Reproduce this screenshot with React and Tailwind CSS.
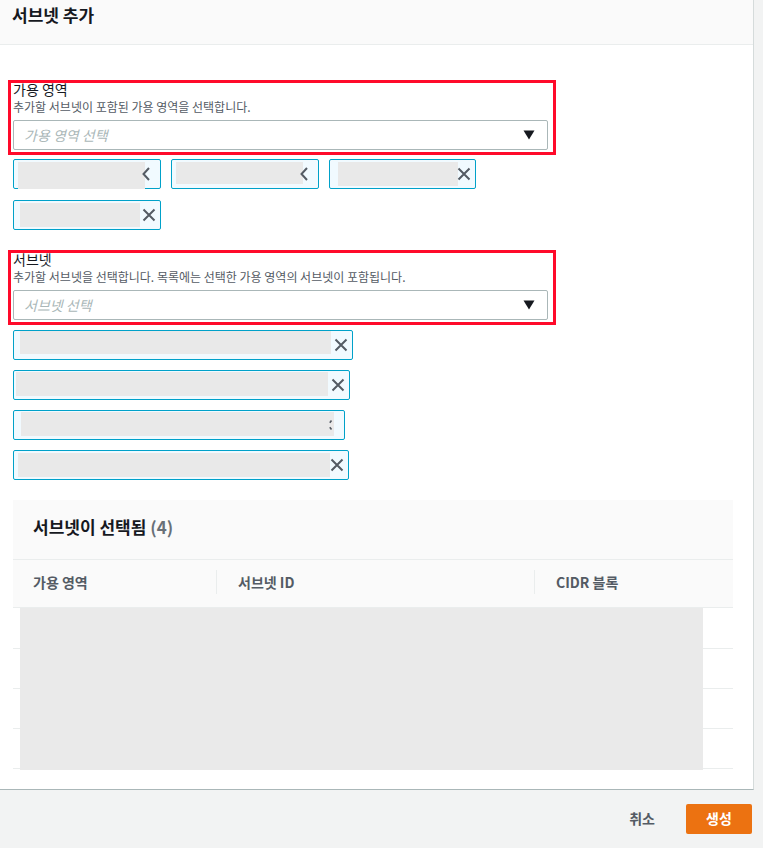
import React from "react";

const font = { fontFamily: '"Noto Sans CJK KR", "Noto Sans", sans-serif' };

function XIcon({ half = false, tiny = false }) {
  if (tiny) {
    return (
      <svg width="12" height="12" viewBox="0 0 12 12" className="shrink-0">
        <path d="M3.5 1.5 L1.8 3.8 M1.8 8.2 L3.5 10.5" stroke="#545b64" strokeWidth="1.6" fill="none" />
      </svg>
    );
  }
  return (
    <svg width="14" height="14" viewBox="0 0 14 14" className="shrink-0">
      {half ? (
        <path d="M7 1 L1.5 7 L7 13" stroke="#545b64" strokeWidth="2" fill="none" />
      ) : (
        <path d="M1.5 1.5 L12.5 12.5 M12.5 1.5 L1.5 12.5" stroke="#545b64" strokeWidth="2" fill="none" />
      )}
    </svg>
  );
}

function Token({ width, grayW, grayL = 5, half, tiny, grayTop = 2, grayH = 24 }) {
  return (
    <div
      className="relative h-[30px] border border-[#00a1c9] bg-[#f1faff] rounded-[2px] shrink-0"
      style={{ width }}
    >
      <div
        className="absolute bg-[#e9e9e9]"
        style={{ left: grayL, top: grayTop, width: grayW, height: grayH }}
      />
      <div className="absolute right-[3px] top-0 h-full flex items-center pr-[1px]">
        <XIcon half={half} tiny={tiny} />
      </div>
    </div>
  );
}

function Field({ label, desc, placeholder }) {
  return (
    <div className="-ml-[5px] w-[548px] border-[3px] border-[#ff0a2a] pl-[2px] pr-[5px] pb-[2px]">
      <div className="text-[14px] leading-[12px] h-[12px] text-[#16191f]">{label}</div>
      <div className="mt-[4px] text-[12px] leading-[16px] text-[#545b64]">{desc}</div>
      <div className="mt-[5px] h-[30px] w-[535px] border border-[#aab7b8] rounded-[2px] flex items-center justify-between pl-[10px] pr-[12px] bg-white">
        <span className="text-[14px] italic text-[#aab7b8]">{placeholder}</span>
        <svg width="12" height="10" viewBox="0 0 12 10">
          <path d="M0.5 0.5 L11.5 0.5 L6 9.5 Z" fill="#16191f" />
        </svg>
      </div>
    </div>
  );
}

export default function App() {
  return (
    <div className="w-[763px] h-[848px] bg-[#f2f3f3] flex flex-col" style={font}>
      <div className="w-[754px] h-[790px] bg-white border-r border-[#d5dbdb] border-b border-b-[#aab7b8] flex flex-col">
        <div className="h-[45px] bg-[#fafafa] border-b border-[#eaeded] flex items-start pt-[3px] pl-[12px]">
          <h2 className="text-[17px] leading-[24px] font-bold text-[#16191f]">서브넷 추가</h2>
        </div>
        <div className="px-[13px] pt-[35px] flex flex-col">
          <Field
            label="가용 영역"
            desc="추가할 서브넷이 포함된 가용 영역을 선택합니다."
            placeholder="가용 영역 선택"
          />
          <div className="mt-[4px] flex gap-[10px]">
            <Token width={148} grayW={127} grayL={4} grayTop={2} grayH={27} half />
            <Token width={148} grayW={127} grayL={4} grayTop={2} grayH={22} half />
            <Token width={147} grayW={120} grayL={8} grayTop={2} grayH={24} />
          </div>
          <div className="mt-[11px] flex">
            <Token width={148} grayW={120} grayL={6} grayTop={2} grayH={24} />
          </div>
          <div className="mt-[20px]">
            <Field
              label="서브넷"
              desc="추가할 서브넷을 선택합니다. 목록에는 선택한 가용 영역의 서브넷이 포함됩니다."
              placeholder="서브넷 선택"
            />
          </div>
          <div className="mt-[5px] flex flex-col gap-[10px]">
            <Token width={340} grayW={311} grayL={6} grayTop={0} grayH={23} />
            <Token width={337} grayW={312} grayL={2} grayTop={1} grayH={24} />
            <Token width={332} grayW={313} grayL={7} grayTop={1} grayH={24} tiny />
            <Token width={336} grayW={312} grayL={4} grayTop={2} grayH={24} />
          </div>
          <div className="mt-[20px] w-[720px] relative">
            <div className="h-[60px] bg-[#fafafa] border-b border-[#eaeded] flex items-start pt-[15px] pl-[20px]">
              <h3 className="text-[17px] leading-[24px] font-bold text-[#16191f]">
                서브넷이 선택됨 <span className="text-[#687078]">(4)</span>
              </h3>
            </div>
            <div className="h-[48px] bg-[#fafafa] border-b border-[#eaeded] flex items-center text-[14px] font-bold text-[#545b64]">
              <div className="w-[204px] pl-[20px] h-[24px] flex items-center border-r border-[#eaeded] -mt-[3px]">가용 영역</div>
              <div className="w-[318px] pl-[21px] h-[24px] flex items-center border-r border-[#eaeded] -mt-[3px]">서브넷 ID</div>
              <div className="pl-[21px] h-[24px] flex items-center -mt-[3px]">CIDR 블록</div>
            </div>
            <div className="flex flex-col">
              <div className="h-[41px] border-b border-[#eaeded]" />
              <div className="h-[40px] border-b border-[#eaeded]" />
              <div className="h-[40px] border-b border-[#eaeded]" />
              <div className="h-[40px] border-b border-[#eaeded]" />
            </div>
            <div className="absolute left-[7px] top-[108px] w-[683px] h-[162px] bg-[#eaeaea]" />
          </div>
        </div>
      </div>
      <div className="flex-1 flex items-center justify-end pr-[11px] gap-[31px] -mt-[1px]">
        <button className="text-[14px] font-bold text-[#545b64]">취소</button>
        <button className="w-[66px] h-[30px] bg-[#ec7211] rounded-[2px] text-[14px] font-bold text-white">생성</button>
      </div>
    </div>
  );
}
